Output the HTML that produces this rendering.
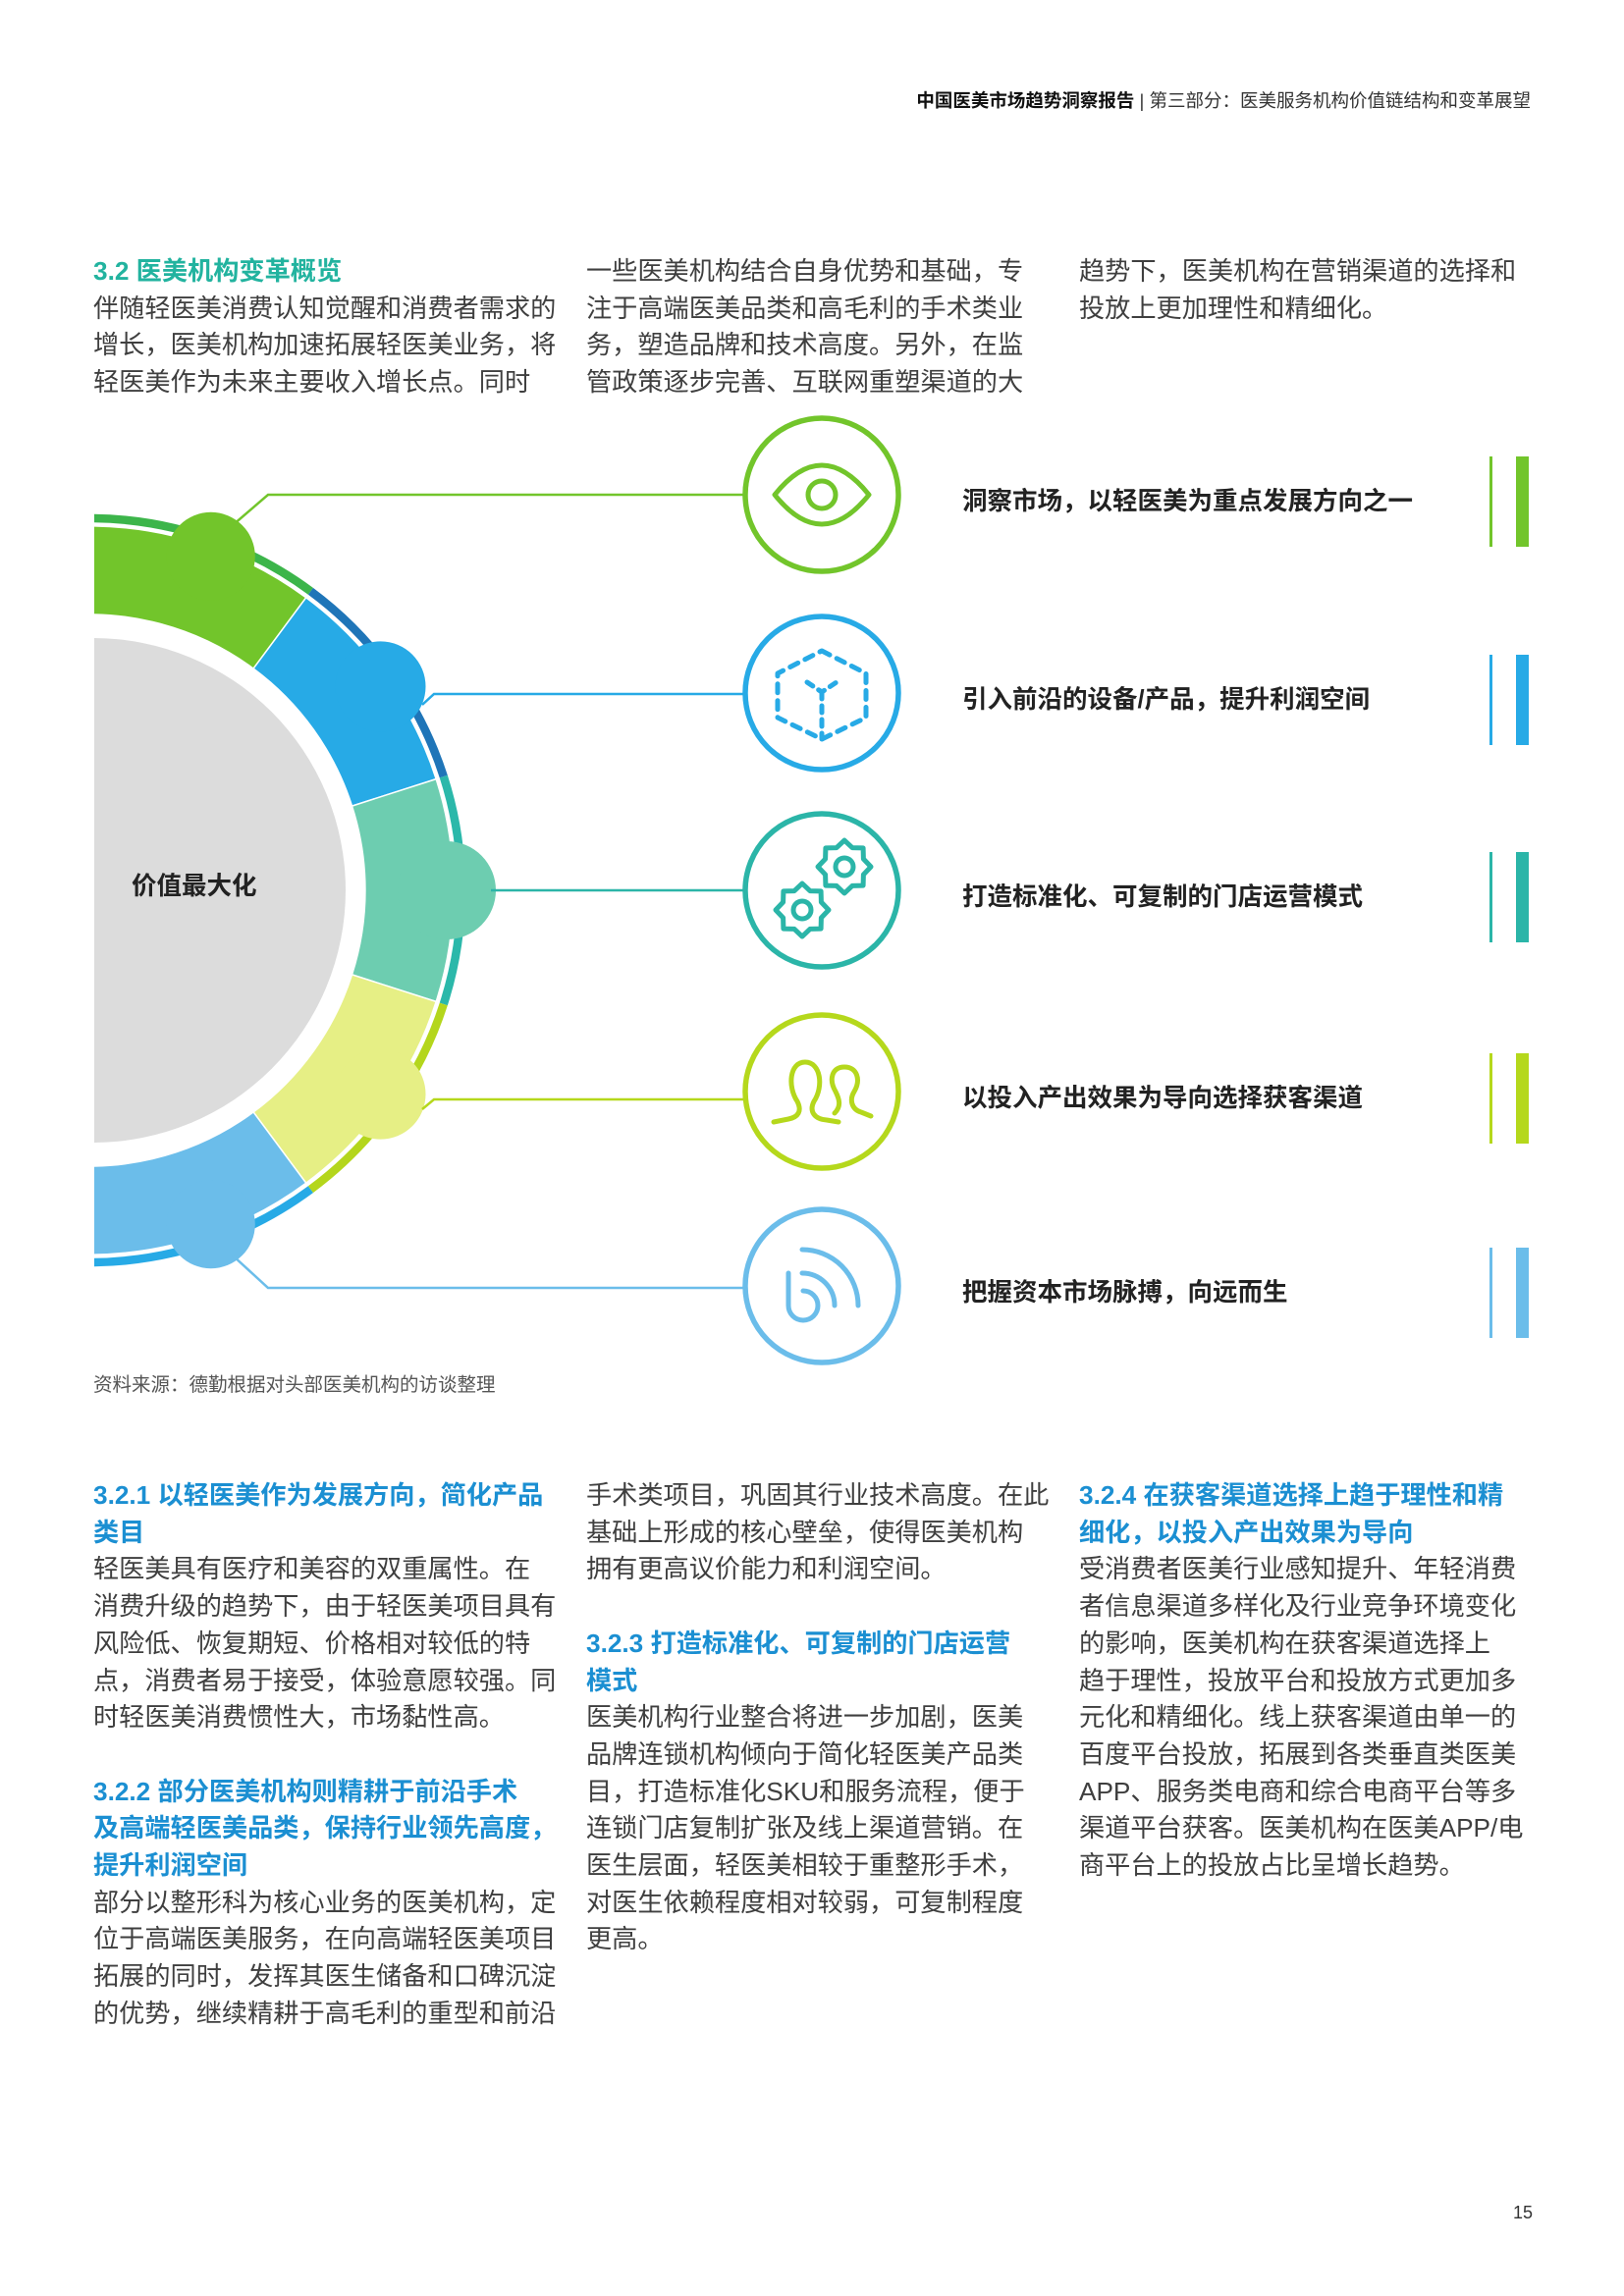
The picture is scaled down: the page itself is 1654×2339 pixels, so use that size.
<!DOCTYPE html>
<html><head><meta charset="utf-8">
<style>
html,body{margin:0;padding:0;background:#fff}
body{width:1654px;height:2339px;position:relative;overflow:hidden;font-family:"Liberation Sans","Noto Sans CJK SC",sans-serif;color:#3f3f3f}
.t{position:absolute;white-space:nowrap;font-size:26.2px;line-height:37.7px}
.h1{color:#22b39f;font-weight:bold}
.h2{color:#1b8fd2;font-weight:bold}
.lab{position:absolute;left:980px;font-size:25.5px;font-weight:bold;color:#222;line-height:30px;white-space:nowrap}
.bar1{position:absolute;left:1517px;width:3px;height:92px}
.bar2{position:absolute;left:1544px;width:13px;height:92px}
</style></head><body>
<div style="position:absolute;right:95px;top:90px;font-size:18.5px;line-height:26px;color:#333;white-space:nowrap"><b style="color:#111">中国医美市场趋势洞察报告</b> | 第三部分：医美服务机构价值链结构和变革展望</div>

<div class="t" style="left:95px;top:258px"><span class="h1">3.2 医美机构变革概览</span><br>伴随轻医美消费认知觉醒和消费者需求的<br>增长，医美机构加速拓展轻医美业务，将<br>轻医美作为未来主要收入增长点。同时</div>
<div class="t" style="left:597px;top:258px">一些医美机构结合自身优势和基础，专<br>注于高端医美品类和高毛利的手术类业<br>务，塑造品牌和技术高度。另外，在监<br>管政策逐步完善、互联网重塑渠道的大</div>
<div class="t" style="left:1099px;top:258px">趋势下，医美机构在营销渠道的选择和<br>投放上更加理性和精细化。</div>

<svg style="position:absolute;left:0;top:0" width="1654" height="1450" viewBox="0 0 1654 1450">
<defs><clipPath id="c"><rect x="96" y="400" width="800" height="1000"/></clipPath></defs>
<g clip-path="url(#c)">
<circle cx="95" cy="907" r="257" fill="#dcdcdc"/>
<g fill="none" stroke-width="8.5">
<path d="M25.2,533.8 A379,379 0 0 1 316.4,602.3" stroke="#3cb54a"/>
<path d="M316.4,602.3 A379,379 0 0 1 451.8,791.1" stroke="#1f75b8"/>
<path d="M451.8,791.1 A379,379 0 0 1 451.8,1022.9" stroke="#2bb8aa"/>
<path d="M451.8,1022.9 A379,379 0 0 1 316.4,1211.7" stroke="#b4d61c"/>
<path d="M316.4,1211.7 A379,379 0 0 1 25.2,1280.2" stroke="#27aae6"/>
</g>
<g stroke="#fff" stroke-width="1.5">
<path d="M26.6,541.6 A371,371 0 0 1 311.7,608.8 L258.1,681.1 A281,281 0 0 0 42.2,630.3Z" fill="#72c52b"/>
<path d="M311.7,608.8 A371,371 0 0 1 444.2,793.6 L358.5,821.1 A281,281 0 0 0 258.1,681.1Z" fill="#27aae6"/>
<path d="M444.2,793.6 A371,371 0 0 1 444.2,1020.4 L358.5,992.9 A281,281 0 0 0 358.5,821.1Z" fill="#6dcdb0"/>
<path d="M444.2,1020.4 A371,371 0 0 1 311.7,1205.2 L258.1,1132.9 A281,281 0 0 0 358.5,992.9Z" fill="#e6ef85"/>
<path d="M311.7,1205.2 A371,371 0 0 1 26.6,1272.4 L42.2,1183.7 A281,281 0 0 0 258.1,1132.9Z" fill="#6bbdea"/>
</g>
<circle cx="214.8" cy="566.8" r="45" fill="#72c52b"/>
<circle cx="387.5" cy="699.4" r="46" fill="#27aae6"/>
<circle cx="455" cy="907" r="50" fill="#6dcdb0"/>
<circle cx="387.5" cy="1114.6" r="46" fill="#e6ef85"/>
<circle cx="214.8" cy="1247.2" r="45" fill="#6bbdea"/>
</g>
<g fill="none" stroke-width="2.5">
<path d="M237,535 L273,504 L757,504" stroke="#72c52b"/>
<path d="M430,718 L442,707 L757,707" stroke="#27aae6"/>
<path d="M500,907 L757,907" stroke="#2bb5a8"/>
<path d="M430,1130 L442,1120 L757,1120" stroke="#b5d81c"/>
<path d="M237,1279 L273,1312 L757,1312" stroke="#6bbdea"/>
</g>
<text x="134" y="911" font-family="Liberation Sans,Noto Sans CJK SC,sans-serif" font-size="25.5" font-weight="bold" fill="#222">价值最大化</text>
<g fill="#fff" stroke-width="5.5">
<circle cx="837" cy="504" r="78" stroke="#72c52b"/>
<circle cx="837" cy="706" r="78" stroke="#27aae6"/>
<circle cx="837" cy="907" r="78" stroke="#2bb5a8"/>
<circle cx="837" cy="1112" r="78" stroke="#b5d81c"/>
<circle cx="837" cy="1310" r="78" stroke="#6bbdea"/>
</g>
<g fill="none" stroke-width="5" stroke-linecap="round" stroke-linejoin="round">
<g transform="translate(837,504)" stroke="#72c52b"><path d="M-48,0 Q0,-60 48,0 Q0,60 -48,0Z"/><circle r="14"/></g>
<g transform="translate(837,706)" stroke="#27aae6" stroke-dasharray="9 8"><path d="M0,-43 L45,-20 L45,25 L0,47 L-45,25 L-45,-20Z"/><path d="M-15,-11 L0,-1 L15,-11 M0,-1 L0,47" stroke-dasharray="7 7"/></g>
<g transform="translate(837,907)" stroke="#2bb5a8">
<g transform="translate(23,-24)"><path d="M27,0 L19.4,8 L19.1,19.1 L8,19.4 L0,27 L-8,19.4 L-19.1,19.1 L-19.4,8 L-27,0 L-19.4,-8 L-19.1,-19.1 L-8,-19.4 L0,-27 L8,-19.4 L19.1,-19.1 L19.4,-8Z"/><circle r="9"/></g>
<g transform="translate(-20,20)"><path d="M27,0 L19.4,8 L19.1,19.1 L8,19.4 L0,27 L-8,19.4 L-19.1,19.1 L-19.4,8 L-27,0 L-19.4,-8 L-19.1,-19.1 L-8,-19.4 L0,-27 L8,-19.4 L19.1,-19.1 L19.4,-8Z"/><circle r="9"/></g>
</g>
<g transform="translate(837,1112)" stroke="#b5d81c"><path d="M-49,31 L-34,28 C-24,26 -20,20 -25,10 C-35,-5 -33,-30 -17,-30 C-1,-30 2,-5 -8,10 C-13,20 -8,28 5,29 L17,31"/><path d="M13,22 C20,15 18,8 14,0 C7,-12 10,-25 23,-25 C36,-25 40,-12 33,0 C28,8 30,18 40,21 L50,25"/></g>
<g transform="translate(837,1310)" stroke="#6bbdea"><path d="M-34,-13 L-34,20 A15,15 0 1 0 -19,5"/><path d="M-20,-13 A33,33 0 0 1 13,20"/><path d="M-20,-37 A57,57 0 0 1 37,20"/></g>
</g>
</svg>

<div class="lab" style="top:496px">洞察市场，以轻医美为重点发展方向之一</div>
<div class="lab" style="top:698px">引入前沿的设备/产品，提升利润空间</div>
<div class="lab" style="top:899px">打造标准化、可复制的门店运营模式</div>
<div class="lab" style="top:1104px">以投入产出效果为导向选择获客渠道</div>
<div class="lab" style="top:1302px">把握资本市场脉搏，向远而生</div>

<div class="bar1" style="top:465px;background:#72c52b"></div><div class="bar2" style="top:465px;background:#72c52b"></div>
<div class="bar1" style="top:667px;background:#27aae6"></div><div class="bar2" style="top:667px;background:#27aae6"></div>
<div class="bar1" style="top:868px;background:#2bb5a8"></div><div class="bar2" style="top:868px;background:#2bb5a8"></div>
<div class="bar1" style="top:1073px;background:#b5d81c"></div><div class="bar2" style="top:1073px;background:#b5d81c"></div>
<div class="bar1" style="top:1271px;background:#6bbdea"></div><div class="bar2" style="top:1271px;background:#6bbdea"></div>

<div style="position:absolute;left:95px;top:1398px;font-size:19.5px;line-height:26px;color:#555;white-space:nowrap">资料来源：德勤根据对头部医美机构的访谈整理</div>

<div class="t" style="left:95px;top:1505px"><span class="h2">3.2.1 以轻医美作为发展方向，简化产品<br>类目</span><br>轻医美具有医疗和美容的双重属性。在<br>消费升级的趋势下，由于轻医美项目具有<br>风险低、恢复期短、价格相对较低的特<br>点，消费者易于接受，体验意愿较强。同<br>时轻医美消费惯性大，市场黏性高。<br>&nbsp;<br><span class="h2">3.2.2 部分医美机构则精耕于前沿手术<br>及高端轻医美品类，保持行业领先高度，<br>提升利润空间</span><br>部分以整形科为核心业务的医美机构，定<br>位于高端医美服务，在向高端轻医美项目<br>拓展的同时，发挥其医生储备和口碑沉淀<br>的优势，继续精耕于高毛利的重型和前沿</div>

<div class="t" style="left:597px;top:1505px">手术类项目，巩固其行业技术高度。在此<br>基础上形成的核心壁垒，使得医美机构<br>拥有更高议价能力和利润空间。<br>&nbsp;<br><span class="h2">3.2.3 打造标准化、可复制的门店运营<br>模式</span><br>医美机构行业整合将进一步加剧，医美<br>品牌连锁机构倾向于简化轻医美产品类<br>目，打造标准化SKU和服务流程，便于<br>连锁门店复制扩张及线上渠道营销。在<br>医生层面，轻医美相较于重整形手术，<br>对医生依赖程度相对较弱，可复制程度<br>更高。</div>

<div class="t" style="left:1099px;top:1505px"><span class="h2">3.2.4 在获客渠道选择上趋于理性和精<br>细化，以投入产出效果为导向</span><br>受消费者医美行业感知提升、年轻消费<br>者信息渠道多样化及行业竞争环境变化<br>的影响，医美机构在获客渠道选择上<br>趋于理性，投放平台和投放方式更加多<br>元化和精细化。线上获客渠道由单一的<br>百度平台投放，拓展到各类垂直类医美<br>APP、服务类电商和综合电商平台等多<br>渠道平台获客。医美机构在医美APP/电<br>商平台上的投放占比呈增长趋势。</div>

<div style="position:absolute;left:1541px;top:2244px;font-size:18px;color:#333">15</div>
</body></html>
